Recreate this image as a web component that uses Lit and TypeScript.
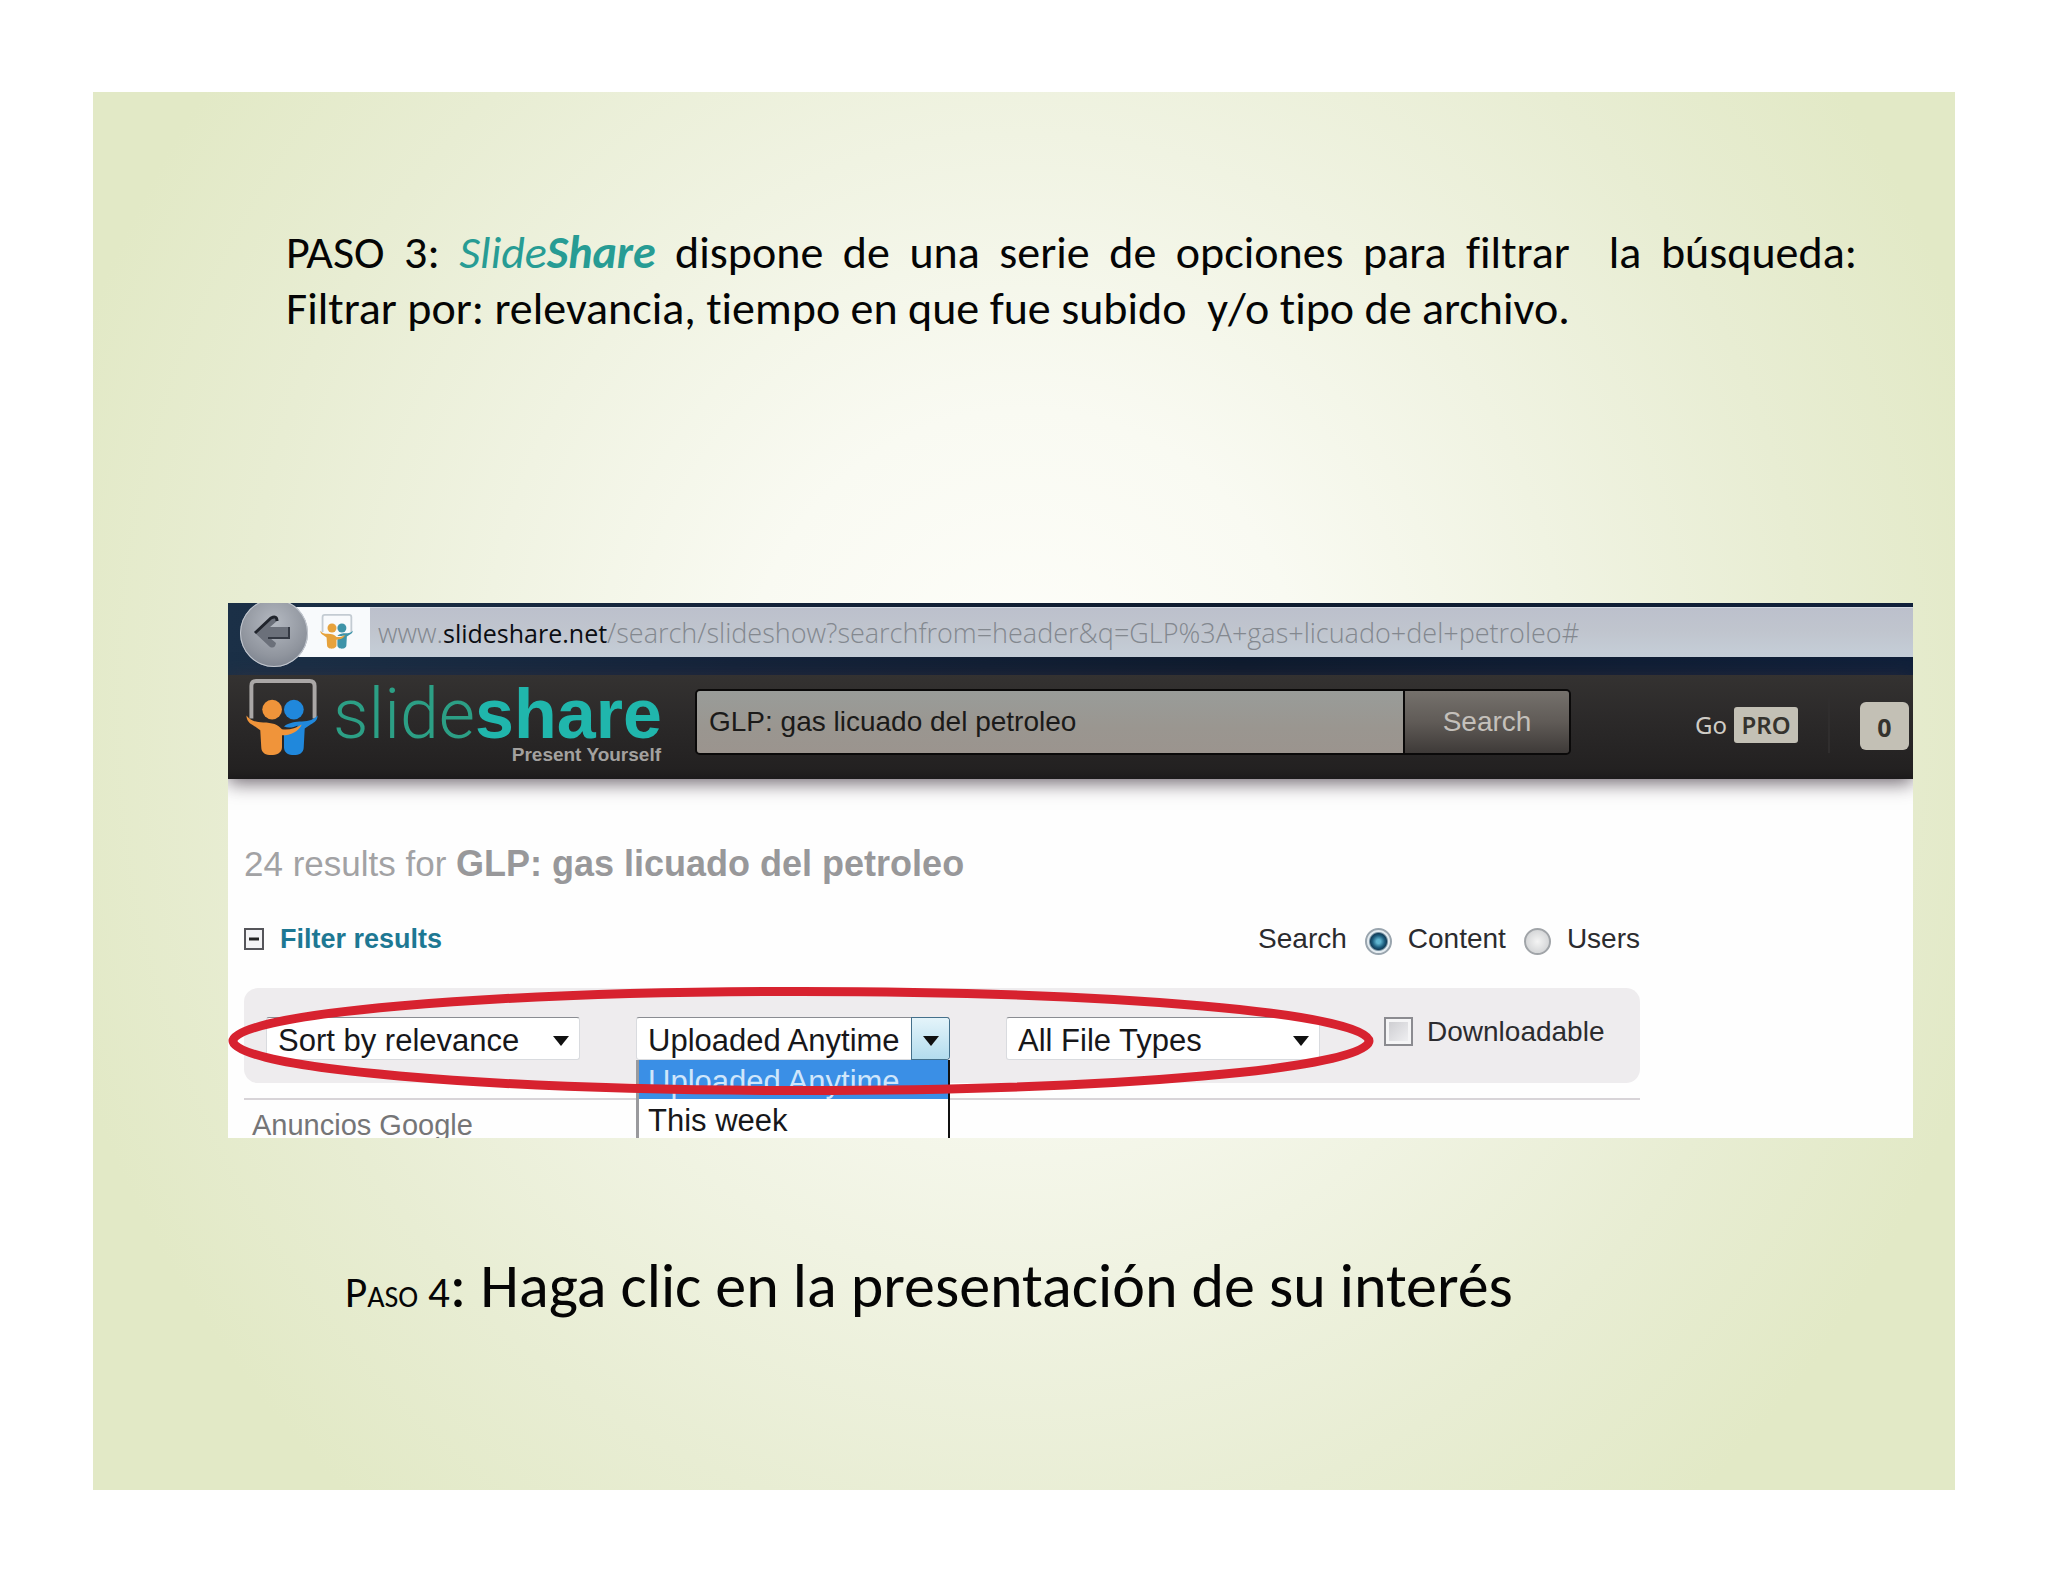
import { LitElement, html, css, svg } from "lit";
import { customElement, property } from "lit/decorators.js";

const people = (left: string, right: string, frame: string) => svg`
  <path d="M5 40V7q0-5 5-5h54q5 0 5 5v33" fill="none" stroke=${frame} stroke-width="4"/>
  <circle cx="26" cy="31" r="10" fill=${left}/>
  <circle cx="48" cy="31" r="10" fill=${right}/>
  <path d="M72 37c0 5-3 7-7 9l-6 4-1 19c0 6-5 8-10 8s-10-2-10-8V56c6-1 12-4 14-9-4 2-10 3-14 1 5-4 12-5 18-5 8 0 12-2 16-6z" fill=${right}/>
  <path d="M0 37c0 5 3 8 7 10l7 5 1 17c0 6 5 8 10 8s11-2 11-8V57c9 0 17-4 20-11-6 4-13 6-20 5-4-5-10-7-19-7-8 0-13-2-17-7z" fill=${left}/>
`;

@customElement("browser-bar")
class BrowserBar extends LitElement {
  static styles = css`
    :host {
      display: block;
      height: 72px;
      background: linear-gradient(90deg, #1b3047, #14233a 30%, #0e1b2e 60%, #10203a);
      font-family: "Open Sans", "Noto Sans", sans-serif;
    }
    .row { display: flex; align-items: flex-start; height: 100%; padding-left: 12px; box-sizing: border-box; }
    .back {
      display: block; flex: none; position: relative; z-index: 1;
      width: 68px; height: 68px; margin: -4px -14px 0 0; padding: 0;
      border: 0; border-radius: 50%;
      background: radial-gradient(circle at 50% 35%, #b4b9c1, #90959e 60%, #6d7582);
      box-shadow: inset 0 0 0 1px #c3c8d0;
    }
    .back svg { display: block; width: 68px; height: 68px; }
    .address {
      display: flex; align-items: center; flex: 1; min-width: 0;
      height: 50px; margin-top: 4px;
      background: linear-gradient(#bcc0cc, #c0c5ce 50%, #c5ced8);
      box-shadow: inset 0 1px #d5d9e1;
    }
    .site { display: flex; align-items: center; justify-content: center; flex: none; width: 76px; height: 50px; padding-left: 8px; box-sizing: border-box; background: #f8fafc; }
    .site svg { width: 35px; height: 36px; }
    .url { margin: 2px 0 0 8px; font-size: 27px; line-height: 36px; color: #83888f; white-space: nowrap; font-weight: 300; text-decoration: none; }
    .url b { font-size: 25px; font-weight: 400; color: #0b0d12; }
  `;
  render() {
    return html`
      <div class="row">
        <button class="back" aria-label="Back">
          <svg viewBox="0 0 68 68" aria-hidden="true">
            <path d="M15 34 31 19q6-3 6 3l-7 6h19v11H30l6 5q-1 6-6 4z" fill="#6b707a"/>
            <path d="M15 34 31 19q6-3 6 3" fill="none" stroke="#20242c" stroke-width="3"/>
            <path d="M28 39h21V28" fill="none" stroke="#343943" stroke-width="2"/>
          </svg>
        </button>
        <div class="address">
          <span class="site">
            <svg viewBox="0 0 72 80" aria-hidden="true">${people("#e6a23c", "#3e93a8", "#c3cbd2")}</svg>
          </span>
          <a class="url" href="#">www.<b>slideshare.net</b>/search/slideshow?searchfrom=header&amp;q=GLP%3A+gas+licuado+del+petroleo#</a>
        </div>
      </div>
    `;
  }
}

@customElement("site-header")
class SiteHeader extends LitElement {
  static styles = css`
    :host {
      display: block; position: relative;
      height: 104px;
      background: linear-gradient(#343231, #2b2929 45%, #232121 90%, #1c1a1b);
      box-shadow: 0 4px 18px rgba(60, 50, 60, 0.75);
      font-family: "Liberation Sans", Arial, sans-serif;
    }
    .row { display: flex; align-items: flex-start; padding: 4px 4px 0 17px; }
    .mark { flex: none; width: 74px; height: 79px; margin-right: 14px; }
    .brand { flex: none; display: flex; flex-direction: column; width: 328px; text-decoration: none; }
    .name { font-size: 70px; line-height: 70px; color: #1fb5a5; white-space: nowrap; }
    .thin { font-family: Roboto, sans-serif; font-weight: 300; color: #2c9f85; }
    .name b { color: #20b6ac; }
    .tag { align-self: flex-end; margin-top: -4px; font-size: 19px; line-height: 20px; font-weight: 700; color: #a3a19f; }
    .search {
      flex: 1; display: flex; min-width: 0; height: 62px; margin: 10px 0 0 34px;
      border: 2px solid #0a0909; border-radius: 5px; overflow: hidden;
    }
    .field {
      flex: 1; min-width: 0; padding: 0 0 0 12px; border: 0;
      background: linear-gradient(#999c99, #9a9690 60%, #9b948e);
      font: 28px "Liberation Sans", Arial, sans-serif; color: #1b1a19;
    }
    .go {
      flex: none; width: 166px; padding: 0; border: 0; border-left: 2px solid #0a0909;
      background: linear-gradient(#75716c, #605b57 50%, #3e3a38);
      font: 28px "Liberation Sans", Arial, sans-serif; color: #c4c0bb;
    }
    .side { flex: none; display: flex; align-items: flex-start; margin-top: 18px; font-family: "Noto Sans", sans-serif; }
    .pro { display: flex; align-items: center; gap: 7px; margin: 10px 0 0 124px; font-size: 24px; line-height: 36px; color: #cfccc6; text-decoration: none; }
    .pro b { width: 64px; border-radius: 3px; background: #c3c0b5; color: #35332e; font-weight: 600; text-align: center; }
    .rule { width: 2px; height: 56px; margin: 0 30px; background: #302e2e; }
    .count {
      width: 49px; height: 48px; margin-top: 5px; padding: 2px 0 0; border: 0; border-radius: 6px; background: #c3c0b5;
      font: 700 25px "Noto Sans", sans-serif; color: #35332e; line-height: 44px;
    }
  `;
  render() {
    return html`
      <div class="row">
        <svg class="mark" viewBox="0 0 72 80" aria-hidden="true">${people("#f0943a", "#2088dc", "#aaa7a6")}</svg>
        <a class="brand" href="#">
          <span class="name"><span class="thin">slide</span><b>share</b></span>
          <span class="tag">Present Yourself</span>
        </a>
        <form class="search">
          <input class="field" type="text" aria-label="Search text" .value=${"GLP: gas licuado del petroleo"}>
          <button class="go" type="button">Search</button>
        </form>
        <div class="side">
          <a class="pro" href="#">Go <b>PRO</b></a>
          <span class="rule"></span>
          <button class="count">0</button>
        </div>
      </div>
    `;
  }
}

@customElement("filter-select")
class FilterSelect extends LitElement {
  static styles = css`
    :host { display: block; position: relative; font-family: "Liberation Sans", Arial, sans-serif; }
    .box {
      display: flex; align-items: stretch; position: relative; height: 43px; box-sizing: border-box;
      background: #fff; border: 1px solid #d9dbdf; border-top-color: #8a8c92; border-radius: 3px;
    }
    .choice {
      appearance: none; width: 100%; margin: 0; padding: 2px 38px 0 11px; border: 0; background: none;
      font: 31px "Liberation Sans", Arial, sans-serif; line-height: 41px; color: #17171a;
    }
    .arrow { position: absolute; right: 0; top: 0; bottom: 0; width: 37px; display: flex; align-items: center; justify-content: center; pointer-events: none; border-radius: 0 3px 3px 0; }
    .arrow svg { width: 16px; height: 10px; margin-top: 4px; }
    .open .arrow { background: linear-gradient(#e4f4fa, #b3dcee); box-shadow: 0 0 0 1px #44708b; }
    .list {
      position: absolute; left: 0; right: 0; top: 43px; z-index: 1; margin: 0; padding: 0; list-style: none;
      background: #fff; border: 0 solid #111; border-left: 3px solid #9a9a9d; border-right-width: 2px;
      font-size: 31px; line-height: 43px; color: #17171a;
    }
    .item { height: 39px; padding-left: 9px; }
    .item.on { background: #3a8fe6; color: #cfe6fb; }
  `;
  @property({ attribute: false }) options: string[] = [];
  @property({ type: Boolean }) open = false;
  @property() name = "";
  render() {
    return html`
      <div class="box ${this.open ? "open" : ""}">
        <select class="choice" aria-label=${this.name}>
          ${this.options.map((o) => html`<option>${o}</option>`)}
        </select>
        <span class="arrow"><svg viewBox="0 0 16 10" aria-hidden="true"><path d="M0 0h16L8 10z" fill="#111"/></svg></span>
      </div>
      ${this.open
        ? html`<ul class="list" role="listbox" aria-label=${this.name}>
            ${this.options.map((o, i) => html`<li class="item ${i === 0 ? "on" : ""}" role="option" aria-selected=${i === 0}>${o}</li>`)}
          </ul>`
        : ""}
    `;
  }
}

@customElement("results-page")
class ResultsPage extends LitElement {
  static styles = css`
    :host { display: block; padding: 59px 16px 0; font-family: "Liberation Sans", Arial, sans-serif; color: #2b2b2e; }
    .content { max-width: 1396px; }
    .title { margin: 0; font-size: 35px; line-height: 52px; font-weight: 400; color: #a2a2a4; white-space: nowrap; }
    .title b { font-size: 36px; color: #98989a; }
    .bar { display: flex; align-items: center; justify-content: space-between; margin-top: 29px; height: 40px; font-size: 28px; line-height: 40px; }
    .toggle { display: flex; align-items: center; gap: 16px; padding: 0; border: 0; background: none; font: 700 27px "Liberation Sans", Arial, sans-serif; color: #1d7893; }
    .toggle svg { width: 20px; height: 22px; }
    .scope { display: flex; align-items: center; }
    .scope label { display: flex; align-items: center; gap: 16px; margin-left: 18px; }
    .radio {
      appearance: none; width: 27px; height: 27px; margin: 4px 0 0; border: 2px solid #a0a4a8; border-radius: 50%;
      background: radial-gradient(circle, #f4f4f4, #c9cbcd);
    }
    .radio:checked { border-color: #9aa5ae; background: radial-gradient(circle, #5fb4cf 0 2px, #1d5d7e 6px, #123f5b 8px, #e3ebf0 10px); }
    .panel {
      position: relative; display: grid; grid-template-columns: repeat(3, minmax(0, 314px)) auto; justify-content: start;
      column-gap: 56px; align-items: start; margin-top: 29px; height: 95px; box-sizing: border-box; padding: 29px 22px 0;
      border-radius: 14px; background: #eeecee;
    }
    .download { display: flex; align-items: center; gap: 14px; margin-left: 8px; font-size: 28px; line-height: 28px; }
    .tick { appearance: none; width: 29px; height: 29px; margin: 0; border: 2px solid #8b8b90; background: linear-gradient(135deg, #c9c9cd, #f4f4f6); box-shadow: inset 0 0 0 3px #f5f5f6; }
    .ring { position: absolute; left: -16px; top: -1px; z-index: 2; width: 1146px; height: 108px; pointer-events: none; }
    .ads { margin-top: 15px; height: 40px; box-sizing: border-box; border-top: 2px solid #d8d4d8; padding-left: 8px; font-size: 29px; line-height: 51px; color: #757577; }
  `;
  render() {
    return html`
      <div class="content">
        <h2 class="title">24 results for <b>GLP: gas licuado del petroleo</b></h2>
        <div class="bar">
          <button class="toggle">
            <svg viewBox="0 0 20 22" aria-hidden="true"><path d="M1 1h18v20H1z" fill="#f3f3f5" stroke="#55555a" stroke-width="2"/><path d="M5 11h10" stroke="#222" stroke-width="3"/></svg>
            Filter results
          </button>
          <div class="scope" role="radiogroup" aria-label="Search">
            Search
            <label><input class="radio" type="radio" name="scope" checked>Content</label>
            <label><input class="radio" type="radio" name="scope">Users</label>
          </div>
        </div>
        <div class="panel">
          <filter-select name="Sort" .options=${["Sort by relevance"]}></filter-select>
          <filter-select name="Upload date" open .options=${["Uploaded Anytime", "This week"]}></filter-select>
          <filter-select name="File type" .options=${["All File Types"]}></filter-select>
          <label class="download"><input class="tick" type="checkbox">Downloadable</label>
          <svg class="ring" viewBox="0 0 1146 108" aria-hidden="true">
            <ellipse cx="573" cy="54" rx="568" ry="49.5" fill="none" stroke="#d7222f" stroke-width="9"/>
          </svg>
        </div>
        <div class="ads">Anuncios Google</div>
      </div>
    `;
  }
}

@customElement("app-root")
class AppRoot extends LitElement {
  static styles = css`
    :host { display: flex; min-height: 100vh; box-sizing: border-box; padding: 92px 93px; background: #fff; font-family: Carlito, Lato, sans-serif; color: #050505; }
    .slide {
      flex: 1; min-width: 0; box-sizing: border-box; padding: 132px 42px 0 135px;
      background: radial-gradient(ellipse 54% 76% at 50% 44%, #fefefa 0%, #f9faf2 28%, #f0f3e2 54%, #e8edd3 78%, #e2e9c6 100%);
    }
    .step { margin: 0 56px 0 58px; font-size: 46px; line-height: 56px; text-align: justify; font-variant-ligatures: none; }
    .brand { font-style: italic; color: #279c94; }
    .shot { margin-top: 267px; overflow: hidden; background: #fefefe; }
    .next { margin: 114px 0 0 117px; font-size: 62px; line-height: 68px; font-weight: 400; white-space: nowrap; }
    .lead { font-size: 43px; font-variant: small-caps; }
  `;
  render() {
    return html`
      <main class="slide">
        <p class="step">PASO 3: <span class="brand">Slide<b>Share</b></span> dispone de una serie de opciones para filtrar &nbsp;la búsqueda: Filtrar por: relevancia, tiempo en que fue subido &nbsp;y/o tipo de archivo.</p>
        <section class="shot">
          <browser-bar></browser-bar>
          <site-header></site-header>
          <results-page></results-page>
        </section>
        <h1 class="next"><span class="lead">Paso 4</span>: Haga clic en la presentación de su interés</h1>
      </main>
    `;
  }
}
